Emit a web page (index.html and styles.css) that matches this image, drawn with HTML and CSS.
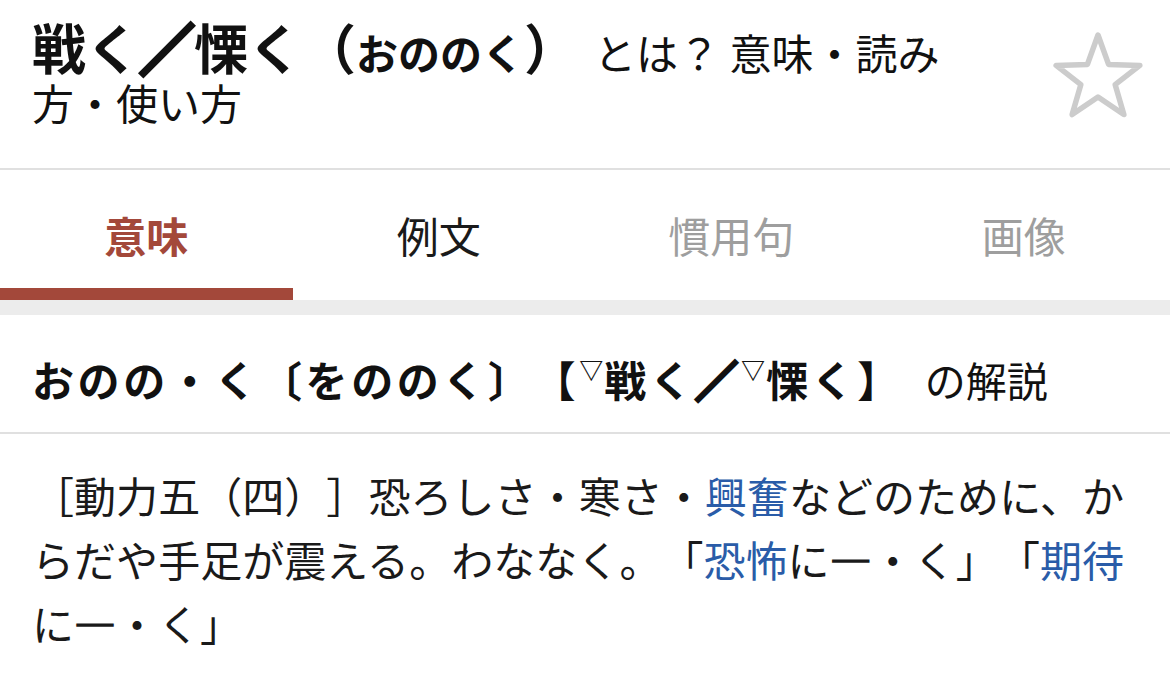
FILE: index.html
```html
<!DOCTYPE html>
<html lang="ja">
<head>
<meta charset="utf-8">
<title>戦く／慄く（おののく） とは？ 意味・読み方・使い方</title>
<link rel="stylesheet" href="styles.css">
</head>
<body>
<header class="header">
  <h1 class="title"><span class="title-main">戦く<span class="slash">／</span>慄く（<span class="title-kana">おののく</span>）</span><span class="title-sub">とは？ 意味・読み方・使い方</span></h1>
  <button class="fav" aria-label="お気に入り">
    <svg class="star" viewBox="0 0 92 92" width="92" height="92">
      <polygon points="46,2 56.58,31.44 87.85,32.4 63.12,51.56 71.86,81.6 46,64 20.14,81.6 28.88,51.56 4.15,32.4 35.42,31.44" />
    </svg>
  </button>
</header>
<nav class="tabs">
  <a class="tab tab-active">意味</a>
  <a class="tab">例文</a>
  <a class="tab tab-disabled">慣用句</a>
  <a class="tab tab-disabled">画像</a>
</nav>
<div class="sep"></div>
<section class="entry">
  <h2 class="entry-head"><span class="entry-word">おのの・く〔をののく〕【<span class="mark">▽</span>戦く<span class="slash">／</span><span class="mark">▽</span>慄く】</span><span class="entry-tail">の解説</span></h2>
  <p class="def">
    <span class="ln ln-just">［動力五（四）］恐ろしさ・寒さ・<a class="link">興奮</a>などのために、か</span>
    <span class="ln ln-just">らだや手足が震える。わななく。「<a class="link">恐怖</a>に<span class="dash">―</span>・く」「<a class="link">期待</a></span>
    <span class="ln">に<span class="dash">―</span>・く」</span>
  </p>
</section>
</body>
</html>
```

FILE: styles.css
```css
* {
  box-sizing: border-box;
}

html, body {
  margin: 0;
  padding: 0;
  background: #ffffff;
}

body {
  font-family: "Noto Sans CJK JP", "Noto Sans", sans-serif;
  color: #111111;
  width: 1170px;
  text-spacing-trim: space-all;
}

.header {
  display: flex;
  align-items: flex-start;
  height: 170px;
  padding: 22px 26px 0 32px;
  border-bottom: 2px solid #e0e0e0;
}

.title {
  margin: 0;
  width: 930px;
  font-size: 42px;
  line-height: 50px;
  font-weight: 400;
  color: #111111;
}

.title-main {
  font-size: 54px;
  font-weight: 700;
}

.title-kana {
  font-size: 42px;
}

.title-sub {
  margin-left: 16px;
  font-weight: 400;
}

.slash {
  -webkit-text-stroke: 5px #111111;
}

.fav {
  margin-left: auto;
  margin-top: 11px;
  padding: 0;
  border: 0;
  background: none;
  width: 92px;
  height: 92px;
}

.star {
  display: block;
  overflow: visible;
}

.star polygon {
  fill: none;
  stroke: #cccccc;
  stroke-width: 5.5;
  stroke-linejoin: round;
}

.tabs {
  display: grid;
  grid-template-columns: repeat(4, 1fr);
  height: 130px;
}

.tab {
  display: flex;
  align-items: center;
  justify-content: center;
  padding-top: 11px;
  border-bottom: 12px solid transparent;
  font-size: 42px;
  color: #1a1a1a;
}

.tab-active {
  color: #a3483a;
  font-weight: 700;
  border-bottom-color: #a3483a;
}

.tab-disabled {
  color: #9e9e9e;
}

.sep {
  height: 15px;
  background: #ececec;
}

.entry-head {
  margin: 0;
  display: flex;
  align-items: center;
  height: 119px;
  padding: 10px 0 0 32px;
  border-bottom: 2px solid #e0e0e0;
  font-size: 42px;
  line-height: 50px;
  color: #111111;
}

.entry-word {
  font-weight: 700;
  letter-spacing: 3.6px;
}

.entry-word .slash {
  -webkit-text-stroke: 4px #111111;
}

.mark {
  font-size: 24px;
  vertical-align: 18px;
  line-height: 0;
  letter-spacing: 1px;
}

.entry-tail {
  margin-left: 22px;
  font-weight: 400;
  font-size: 41px;
}

.def {
  margin: 0;
  padding: 29px 46px 0 32px;
  font-size: 42px;
  line-height: 64px;
  color: #1a1a1a;
}

.ln {
  display: block;
  white-space: nowrap;
}

.ln-just {
  text-align: justify;
  text-align-last: justify;
}

.dash {
  -webkit-text-stroke: 1.5px #1a1a1a;
}

.link {
  color: #2a5ca8;
}
```
